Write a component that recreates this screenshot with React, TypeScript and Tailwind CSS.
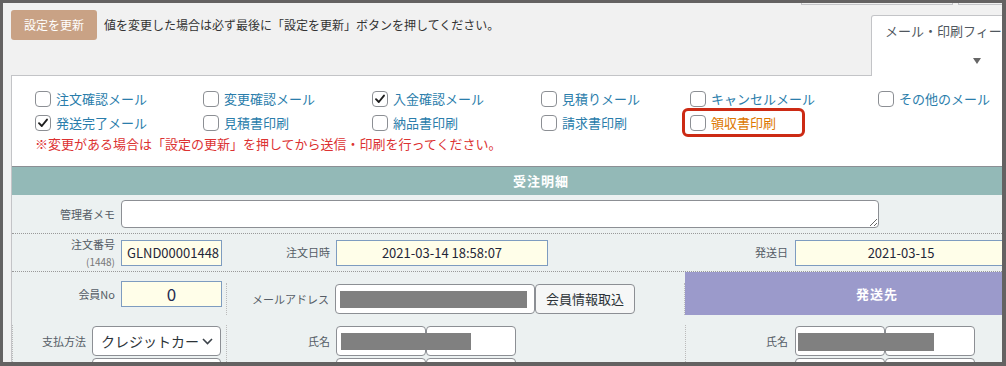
import React from "react";

function Check({ checked }: { checked?: boolean }) {
  return (
    <span className="w-[16px] h-[16px] shrink-0 rounded-[4px] border border-[#8c8f94] bg-white flex items-center justify-center">
      {checked && (
        <svg width="12" height="12" viewBox="0 0 12 12">
          <path d="M2 6.2 L4.8 9 L10 2.6" fill="none" stroke="#1e1e1e" strokeWidth="1.9" strokeLinecap="round" strokeLinejoin="round" />
        </svg>
      )}
    </span>
  );
}

function CB({ label, checked, orange }: { label: string; checked?: boolean; orange?: boolean }) {
  return (
    <div className="flex items-center gap-[5px] h-[24px]">
      <Check checked={checked} />
      <span className={"text-[13px] leading-[18px] whitespace-nowrap " + (orange ? "text-[#dd7700]" : "text-[#2a7dab]")}>{label}</span>
    </div>
  );
}

const Bar = ({ w }: { w: string }) => <div className={"h-[17px] bg-[#808080] " + w} />;

export default function App() {
  return (
    <div className="w-[1006px] h-[366px] overflow-hidden border-t-[3px] border-l-[3px] border-r-[4px] border-b-[4px] border-[#646262] bg-[#f1f1f1] font-['Noto_Sans_CJK_JP',sans-serif]">
      <div className="w-[1100px]">
        {/* fragments of upper nav */}
        <div className="flex h-[2px] pl-[798px] gap-[5px]">
          <div className="w-[152px] h-[2px] border-x border-b border-[#c3c4c7]" />
          <div className="w-[60px] h-[2px] border-l border-b border-[#c3c4c7]" />
        </div>
        {/* top bar */}
        <div className="flex h-[70px]">
          <div className="flex-1 flex items-center self-start mt-[5px] pl-[8px] gap-[7px]">
            <button className="w-[86px] h-[30px] rounded-[3px] bg-[#c9a285] text-white text-[12px] leading-[30px]">設定を更新</button>
            <span className="text-[12px] text-[#333] whitespace-nowrap">値を変更した場合は必ず最後に「設定を更新」ボタンを押してください。</span>
          </div>
          <div className="w-[232px] mt-[10px] h-[61px] mb-[-1px] relative z-10 bg-white border border-b-0 border-[#c3c4c7] rounded-tl-[3px] pl-[13px] pt-[6px]">
            <div className="text-[13px] leading-[18px] text-[#50575e] whitespace-nowrap">メール・印刷フィールド</div>
            <div className="ml-[88px] mt-[18px] w-0 h-0 border-l-[4px] border-r-[4px] border-t-[6px] border-l-transparent border-r-transparent border-t-[#666]" />
          </div>
        </div>
        {/* panel */}
        <div className="ml-[8px] w-[1060px] border border-[#c3c4c7] bg-white">
          <div className="pl-[23px] pt-[11px]">
            <div className="grid grid-cols-[168px_169px_169px_149px_188px_140px]">
              <CB label="注文確認メール" />
              <CB label="変更確認メール" />
              <CB label="入金確認メール" checked />
              <CB label="見積りメール" />
              <CB label="キャンセルメール" />
              <CB label="その他のメール" />
              <CB label="発送完了メール" checked />
              <CB label="見積書印刷" />
              <CB label="納品書印刷" />
              <CB label="請求書印刷" />
              <div className="relative">
                <CB label="領収書印刷" orange />
                <div className="absolute left-[-8px] top-[-3px] w-[123px] h-[29px] border-[3px] border-[#cc2a14] rounded-[6px]" />
              </div>
              <div />
            </div>
            <div className="text-[13px] leading-[18px] text-[#dc3232] mb-[13px] whitespace-nowrap">※変更がある場合は「設定の更新」を押してから送信・印刷を行ってください。</div>
          </div>
          {/* table */}
          <div className="border-t border-[#8c8f94]">
            <div className="h-[28px] bg-[#93b9b7] flex items-center justify-center text-white font-bold text-[13px] tracking-[1px]">受注明細</div>
            <div className="bg-[#ecf1f1] text-[#555d66]">
              {/* row 1 */}
              <div className="h-[39px] flex items-center border-b border-dotted border-[#999]">
                <div className="w-[109px] pr-[6px] text-right text-[11px]">管理者メモ</div>
                <textarea className="w-[758px] h-[28px] rounded-[4px] border border-[#8c8f94] bg-white block" />
              </div>
              {/* row 2 */}
              <div className="h-[38px] flex items-center border-b border-dotted border-[#999]">
                <div className="w-[109px] pr-[6px] h-full pt-[2px] flex flex-col items-end">
                  <span className="text-[11px] leading-[17px]">注文番号</span>
                  <span className="text-[10px] leading-[18px] text-[#777]">(1448)</span>
                </div>
                <div className="w-[101px] h-[26px] border border-[#7e9cc0] bg-[#fffee9] text-[13px] leading-[24px] pl-[5px] text-[#1f2638]">GLND00001448</div>
                <div className="w-[114px] pr-[6px] text-right text-[11px]">注文日時</div>
                <div className="w-[212px] h-[26px] border border-[#7e9cc0] bg-[#fffee9] text-[13px] leading-[24px] text-center text-[#1f2638]">2021-03-14 18:58:07</div>
                <div className="w-[247px] pr-[7px] text-right text-[11px]">発送日</div>
                <div className="w-[212px] h-[26px] border border-[#7e9cc0] bg-[#fffee9] text-[13px] leading-[24px] text-center text-[#1f2638]">2021-03-15</div>
              </div>
              {/* row 3 */}
              <div className="h-[44px] flex items-start">
                <div className="flex items-center mt-[9px]">
                  <div className="w-[109px] pr-[6px] text-right text-[11px]">会員No</div>
                  <div className="w-[101px] h-[26px] border border-[#7e9cc0] bg-[#fffee9] text-[17px] leading-[24px] text-center text-[#1f2a50]">0</div>
                </div>
                <div className="w-[4px]" />
                <div className="mt-[11px] h-[32px] border-l border-dotted border-[#bbb]" />
                <div className="flex items-center mt-[12px]">
                  <div className="w-[108px] pr-[6px] text-right text-[11px]">メールアドレス</div>
                  <div className="w-[200px] h-[30px] rounded-[4px] border border-[#8c8f94] bg-white flex items-center pl-[4px]">
                    <Bar w="w-[187px]" />
                  </div>
                  <button className="w-[100px] h-[30px] rounded-[4px] border border-[#8c8f94] bg-[#f6f7f7] text-[13px] text-[#2c3338]">会員情報取込</button>
                </div>
                <div className="w-[49px]" />
                <div className="mt-[11px] h-[32px] border-l border-dotted border-[#bbb]" />
                <div className="w-[384px] h-[43px] bg-[#9b9acb] flex items-center justify-center text-white font-bold text-[13px] tracking-[1px]">発送先</div>
              </div>
              {/* row 4 */}
              <div className="pt-[9px] flex">
                <div className="w-[215px] border-x border-dotted border-[#bbb] flex flex-col gap-[2px] pt-[1px]">
                  <div className="flex items-center">
                    <div className="w-[79px] pr-[6px] text-right text-[11px]">支払方法</div>
                    <div className="w-[129px] h-[30px] rounded-[4px] border border-[#8c8f94] bg-white flex items-center justify-between pl-[8px] pr-[7px] text-[14px] text-[#2c3338] whitespace-nowrap">
                      <span>クレジットカー</span>
                      <svg width="11" height="7" viewBox="0 0 11 7"><path d="M1 1 L5.5 5.5 L10 1" fill="none" stroke="#3c434a" strokeWidth="1.6" /></svg>
                    </div>
                  </div>
                  <div className="flex items-center">
                    <div className="w-[79px]" />
                    <div className="w-[129px] h-[30px] rounded-[4px] border border-[#8c8f94] bg-white" />
                  </div>
                </div>
                <div className="w-[459px] border-r border-dotted border-[#bbb] flex flex-col gap-[2px] pt-[1px]">
                  <div className="flex items-center">
                    <div className="w-[109px] pr-[6px] text-right text-[11px]">氏名</div>
                    <div className="w-[90px] h-[30px] rounded-[4px] border border-[#8c8f94] bg-white overflow-visible flex items-center pl-[4px] relative">
                      <div className="absolute left-[4px] top-[6px] h-[17px] w-[130px] bg-[#808080] z-10" />
                    </div>
                    <div className="w-[90px] h-[30px] rounded-[4px] border border-[#8c8f94] bg-white" />
                  </div>
                  <div className="flex items-center">
                    <div className="w-[109px]" />
                    <div className="w-[90px] h-[30px] rounded-[4px] border border-[#8c8f94] bg-white" />
                    <div className="w-[90px] h-[30px] rounded-[4px] border border-[#8c8f94] bg-white" />
                  </div>
                </div>
                <div className="flex flex-col gap-[2px] pt-[1px]">
                  <div className="flex items-center">
                    <div className="w-[109px] pr-[7px] text-right text-[11px]">氏名</div>
                    <div className="w-[90px] h-[30px] rounded-[4px] border border-[#8c8f94] bg-white relative">
                      <div className="absolute left-[2px] top-[6px] h-[18px] w-[136px] bg-[#808080] z-10" />
                    </div>
                    <div className="w-[90px] h-[30px] rounded-[4px] border border-[#8c8f94] bg-white" />
                  </div>
                  <div className="flex items-center">
                    <div className="w-[109px]" />
                    <div className="w-[90px] h-[30px] rounded-[4px] border border-[#8c8f94] bg-white" />
                    <div className="w-[90px] h-[30px] rounded-[4px] border border-[#8c8f94] bg-white" />
                  </div>
                </div>
              </div>
            </div>
          </div>
        </div>
      </div>
    </div>
  );
}
